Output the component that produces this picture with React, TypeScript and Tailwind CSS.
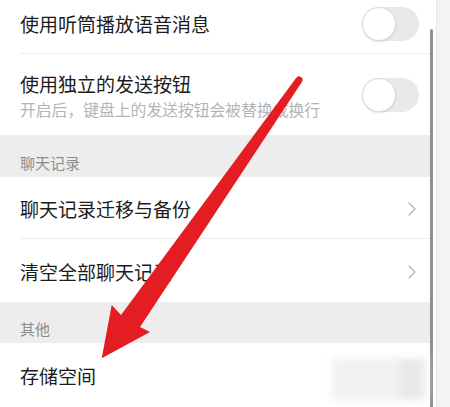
import React from "react";

function Toggle() {
  return (
    <div className="relative w-[57px] h-[34px] rounded-full bg-[#e9e9e9]">
      <div className="absolute left-0 top-0 w-[34px] h-[34px] rounded-full bg-white border border-[#dcdcdc] shadow-[0_1px_2px_rgba(0,0,0,0.12)]" />
    </div>
  );
}

function Chevron() {
  return (
    <svg width="10" height="16" viewBox="0 0 10 16" fill="none">
      <path d="M2 2 L8 8 L2 14" stroke="#b5b5b5" strokeWidth="1.4" strokeLinecap="round" strokeLinejoin="round" />
    </svg>
  );
}

export default function App() {
  const font = { fontFamily: '"Noto Sans CJK SC", "Noto Sans", sans-serif' };
  return (
    <div className="relative w-[450px] h-[407px] flex overflow-hidden bg-white" style={font}>
      <div className="w-[433px] flex flex-col bg-white">
        {/* Row 1 */}
        <div className="h-[53px] flex items-center justify-between pl-5 pr-[14px] pb-[6px]">
          <span className="text-[19px] leading-none text-[#1c1c1c]">使用听筒播放语音消息</span>
          <Toggle />
        </div>
        <div className="ml-5 h-px bg-[#ededed]" />
        {/* Row 2 */}
        <div className="h-[81px] flex items-center justify-between pl-5 pr-[14px]">
          <div className="flex flex-col gap-[9px] pt-[2px]">
            <span className="text-[19px] leading-none text-[#1c1c1c]">使用独立的发送按钮</span>
            <span className="text-[15.8px] leading-none text-[#b4b4b4]">开启后，键盘上的发送按钮会被替换成换行</span>
          </div>
          <Toggle />
        </div>
        {/* Section header */}
        <div className="h-[42px] bg-[#ededed] flex items-end pl-5 pb-[7px]">
          <span className="text-[15px] leading-none text-[#8c8c8c]">聊天记录</span>
        </div>
        {/* Row 3 */}
        <div className="h-[61px] flex items-center justify-between pl-5 pr-[16px] pt-[2px]">
          <span className="text-[19px] leading-none text-[#1c1c1c]">聊天记录迁移与备份</span>
          <Chevron />
        </div>
        <div className="ml-5 h-px bg-[#ededed]" />
        {/* Row 4 */}
        <div className="h-[63px] flex items-center justify-between pl-5 pr-[16px] pt-[2px]">
          <span className="text-[19px] leading-none text-[#1c1c1c]">清空全部聊天记录</span>
          <Chevron />
        </div>
        {/* Section header 2 */}
        <div className="h-[41px] bg-[#ededed] flex items-end pl-5 pb-[7px]">
          <span className="text-[15px] leading-none text-[#8c8c8c]">其他</span>
        </div>
        {/* Row 5 */}
        <div className="flex-1 flex items-start pl-5 pt-[23px]">
          <span className="text-[19px] leading-none text-[#1c1c1c]">存储空间</span>
        </div>
      </div>
      <div className="w-[4px] bg-white border-r border-[#e6e6e6]" />
      <div className="flex-1 bg-[#f3f3f3]" />

      {/* scrollbar */}
      <div className="absolute left-[430px] top-[29px] w-[3px] h-[378px] bg-[#8f8f8f] rounded-t-full" />

      {/* blurred patch */}
      <div className="absolute left-[332px] top-[358px] w-[95px] h-[42px] bg-[#f1f1f1] blur-[4px]" />
      <div className="absolute left-[400px] top-[360px] w-[22px] h-[38px] bg-[#e9e9e9] blur-[2px]" />

      {/* red arrow */}
      <svg className="absolute left-0 top-0" width="450" height="407" viewBox="0 0 450 407">
        <path
          d="M296.1 78 L121 315 L111.7 305 L101.7 358.3 L150 332 L140 327 L301.9 82 A3.5 3.5 0 0 0 296.1 78 Z"
          fill="#e41d22"
        />
      </svg>
    </div>
  );
}
